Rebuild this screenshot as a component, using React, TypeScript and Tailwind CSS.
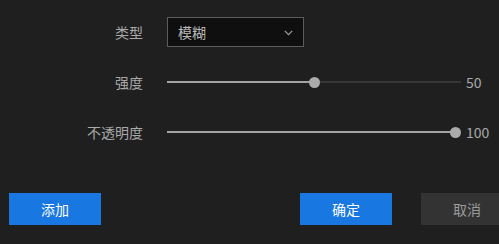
import React from "react";

const font = { fontFamily: '"Noto Sans CJK SC", "Noto Sans", sans-serif' };

function SliderRow({ label, value }: { label: string; value: number }) {
  const center = 6 + (value / 100) * 282;
  return (
    <div className="flex h-[30px] items-center">
      <div className="w-[143px] text-right text-[14px] text-[#a9a9a9]">{label}</div>
      <div className="ml-[24px] relative h-[30px] w-[294px] flex items-center">
        <div className="h-[2px] w-full bg-[#363636]" />
        <div className="absolute left-0 top-[14px] h-[2px] bg-[#a3a3a3]" style={{ width: `${center}px` }} />
        <div
          className="absolute top-[9.5px] h-[11px] w-[11px] rounded-full bg-[#ababab]"
          style={{ left: `${center - 5.5}px` }}
        />
      </div>
      <div className="ml-[5px] text-[14px] text-[#a9a9a9]">{value}</div>
    </div>
  );
}

export default function App() {
  return (
    <div className="w-[499px] h-[244px] overflow-hidden bg-[#1f1f1f]" style={font}>
      <div className="pt-[17px] flex flex-col gap-[20px]">
        <div className="flex h-[30px] items-center">
          <div className="w-[143px] text-right text-[14px] text-[#a9a9a9]">类型</div>
          <div className="ml-[24px] flex h-[30px] w-[137px] items-center justify-between border border-[#5c5c5c] bg-[#0f0f0f] pl-[10px] pr-[10px]">
            <span className="text-[14px] text-[#b9b9b9]">模糊</span>
            <svg width="9" height="6" viewBox="0 0 9 6" className="mt-[1px]">
              <path d="M0.8 0.8 L4.5 4.6 L8.2 0.8" fill="none" stroke="#a0a0a0" strokeWidth="1.2" />
            </svg>
          </div>
        </div>
        <SliderRow label="强度" value={50} />
        <SliderRow label="不透明度" value={100} />
      </div>
      <div className="mt-[46px] flex w-[513px] items-center pl-[9px]">
        <button className="h-[32px] w-[92px] bg-[#1877e0] text-[14px] text-white">添加</button>
        <div className="flex-1" />
        <button className="h-[32px] w-[92px] bg-[#1877e0] text-[14px] text-white">确定</button>
        <button className="ml-[29px] h-[32px] w-[92px] bg-[#333333] text-[14px] text-[#9c9c9c]">取消</button>
      </div>
    </div>
  );
}
